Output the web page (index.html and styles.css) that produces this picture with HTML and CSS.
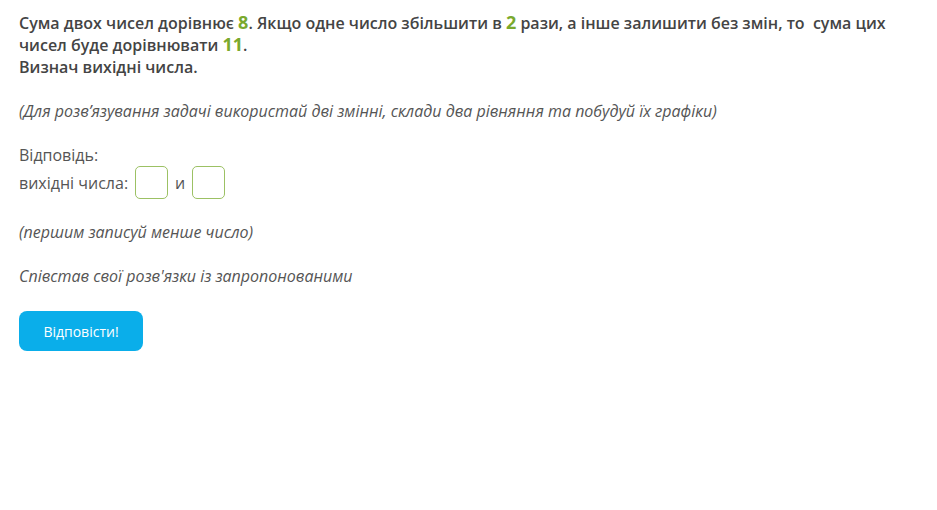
FILE: index.html
```html
<!DOCTYPE html>
<html lang="uk">
<head>
<meta charset="utf-8">
<link rel="stylesheet" href="styles.css">
</head>
<body>
<div class="page">
  <p class="task">Сума двох чисел дорівнює <span class="num">8</span>. Якщо одне число збільшити в <span class="num">2</span> рази, а інше залишити без змін, то&nbsp; сума цих чисел буде дорівнювати <span class="num">11</span>.<br>Визнач вихідні числа.</p>
  <p class="note">(Для розв’язування задачі використай дві змінні, склади два рівняння та побудуй їх графіки)</p>
  <div class="answer">
    <div class="label">Відповідь:</div>
    <div class="row">
      <span>вихідні числа:</span>
      <input class="box" type="text">
      <span>и</span>
      <input class="box" type="text">
    </div>
  </div>
  <p class="note">(першим записуй менше число)</p>
  <p class="note">Співстав свої розв'язки із запропонованими</p>
  <button class="btn">Відповісти!</button>
</div>
</body>
</html>
```
FILE: styles.css
```css
html, body {
  margin: 0;
  padding: 0;
  background: #fff;
}
body {
  font-family: "Open Sans", "Noto Sans", sans-serif;
  color: #444;
}
.page {
  padding: 12px 19px;
  display: flex;
  flex-direction: column;
  align-items: flex-start;
}
p { margin: 0; }
.task {
  font-size: 16px;
  font-weight: 600;
  line-height: 22px;
  color: #444;
}
.num {
  color: #7aa92e;
  font-weight: 700;
  font-size: 18px;
  line-height: 16px;
}
.note {
  font-style: italic;
  font-size: 16px;
  line-height: 22px;
  margin-top: 22px;
  color: #555;
}
.answer {
  margin-top: 22px;
  font-size: 16px;
  color: #555;
}
.label {
  line-height: 22px;
}
.row {
  display: flex;
  align-items: center;
  gap: 7px;
  height: 33px;
}
.box {
  width: 33px;
  height: 33px;
  box-sizing: border-box;
  border: 1px solid #9cc164;
  border-radius: 5px;
  margin: 0;
  padding: 0;
  background: #fff;
}
.btn {
  margin-top: 24px;
  width: 124px;
  height: 40px;
  border: none;
  border-radius: 8px;
  background: #0aaeea;
  color: #fff;
  font-family: "Open Sans", sans-serif;
  font-size: 14px;
}
```
